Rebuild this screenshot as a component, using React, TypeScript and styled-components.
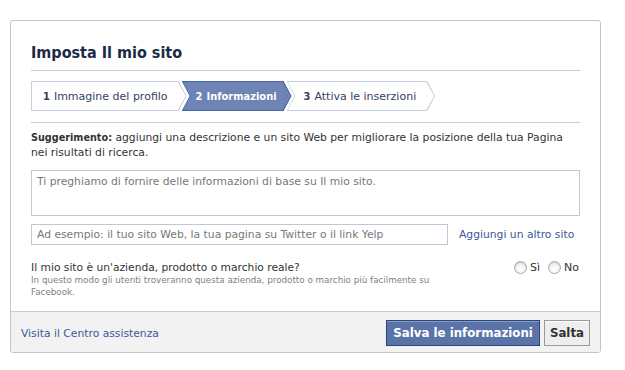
import styled, { createGlobalStyle } from "styled-components";

const boldFont = `"DejaVu Sans Condensed", "Liberation Sans", sans-serif`;

const GlobalStyle = createGlobalStyle`
    body {
        margin: 0;
        background: #fff;
        font-family: "DejaVu Sans", Verdana, sans-serif;
        font-size: 10.75px;
        color: #333;
    }
    b {
        font-family: ${boldFont};
    }
`;

const Page = styled.div`
    padding: 20px 0 0 10px;
`;

const Dialog = styled.div`
    box-sizing: border-box;
    width: 591px;
    border: 1px solid #c4c4c4;
    border-radius: 3px;
    overflow: hidden;
`;

const Body = styled.div`
    padding: 0 20px;
`;

const Title = styled.h2`
    margin: 0;
    padding: 22px 0 7px;
    font-family: ${boldFont};
    font-size: 16px;
    line-height: 20px;
    font-weight: bold;
    color: #1c2a47;
    border-bottom: 1px solid #ccc;
`;

const StepsRow = styled.div`
    display: flex;
    padding: 10px 0 11px;
    border-bottom: 1px solid #ccc;
`;

const notch = (first: boolean) =>
    first
        ? "polygon(0 0, calc(100% - 8px) 0, 100% 50%, calc(100% - 8px) 100%, 0 100%)"
        : "polygon(0 0, calc(100% - 8px) 0, 100% 50%, calc(100% - 8px) 100%, 0 100%, 8px 50%)";

const StepShape = styled.div<{ $first?: boolean; $active?: boolean }>`
    display: flex;
    height: 30px;
    padding: 1px;
    box-sizing: border-box;
    margin-left: ${(p) => (p.$first ? "0" : "-5px")};
    background: ${(p) => (p.$active ? "#4c66a4" : "#c7cedd")};
    clip-path: ${(p) => notch(!!p.$first)};
`;

const StepFace = styled.div<{ $first?: boolean; $active?: boolean }>`
    display: flex;
    align-items: center;
    padding: 0 ${(p) => (p.$active ? "14px" : "18px")} 0 ${(p) => (p.$first ? "11px" : p.$active ? "13px" : "16px")};
    font-size: 11px;
    color: ${(p) => (p.$active ? "#fff" : "#333f5e")};
    font-family: ${(p) => (p.$active ? boldFont : "inherit")};
    font-weight: ${(p) => (p.$active ? "bold" : "normal")};
    background: ${(p) => (p.$active ? "#6d84b4" : "#fff")};
    clip-path: ${(p) => notch(!!p.$first)};
    b {
        margin-right: 4px;
    }
`;

const Hint = styled.p`
    margin: 7px 0 0;
    line-height: 15px;
`;

const Area = styled.div`
    box-sizing: border-box;
    margin-top: 10px;
    height: 46px;
    border: 1px solid #bdc7d8;
    padding: 4px 5px;
    color: #777;
`;

const LinkRow = styled.div`
    display: flex;
    align-items: center;
    gap: 11px;
    margin-top: 8px;
`;

const Field = styled.div`
    box-sizing: border-box;
    width: 417px;
    height: 21px;
    border: 1px solid #bdc7d8;
    padding: 0 5px;
    display: flex;
    align-items: center;
    color: #777;
`;

const Link = styled.a`
    color: #3b5998;
    text-decoration: none;
    cursor: pointer;
`;

const Question = styled.div`
    display: flex;
    justify-content: space-between;
    margin: 15px 0 13px;
`;

const QuestionText = styled.div`
    font-size: 10.7px;
    line-height: 15px;
    color: #333;
`;

const Small = styled.div`
    width: 410px;
    font-size: 8.75px;
    line-height: 11.5px;
    color: #808080;
`;

const Choices = styled.div`
    display: flex;
    align-items: flex-start;
    gap: 8px;
    padding-top: 1px;
    margin-right: 1px;
`;

const Choice = styled.label`
    display: flex;
    align-items: center;
    gap: 3px;
    font-size: 11px;
    color: #333;
`;

const Radio = styled.span`
    box-sizing: border-box;
    width: 13px;
    height: 13px;
    border-radius: 50%;
    border: 1px solid #a8a8a8;
    background: radial-gradient(circle at 50% 70%, #fff 0%, #f4f4f4 45%, #d6d6d6 100%);
    box-shadow: inset 0 1px 1px rgba(0, 0, 0, 0.08);
`;

const Footer = styled.div`
    display: flex;
    align-items: center;
    justify-content: space-between;
    padding: 8px 10px 6px;
    background: #f2f2f2;
    border-top: 1px solid #ccc;
`;

const Buttons = styled.div`
    display: flex;
    gap: 4px;
`;

const Button = styled.button<{ $primary?: boolean }>`
    box-sizing: border-box;
    height: 26px;
    padding: 0 ${(p) => (p.$primary ? "6px" : "5px")};
    font-family: "DejaVu Sans", sans-serif;
    font-size: 11.8px;
    font-weight: bold;
    border: 1px solid ${(p) => (p.$primary ? "#29447e" : "#999")};
    background: ${(p) => (p.$primary ? "#5b74a8" : "#eee")};
    color: ${(p) => (p.$primary ? "#fff" : "#333")};
    box-shadow: inset 0 1px 0 ${(p) => (p.$primary ? "#8a9cc2" : "#fff")};
`;

const steps = [
    { n: "1", label: "Immagine del profilo" },
    { n: "2", label: "Informazioni", active: true },
    { n: "3", label: "Attiva le inserzioni" },
];

export default function App() {
    return (
        <Page>
            <GlobalStyle />
            <Dialog>
                <Body>
                    <Title>Imposta Il mio sito</Title>
                    <StepsRow>
                        {steps.map((s, i) => (
                            <StepShape key={s.n} $first={i === 0} $active={s.active}>
                                <StepFace $first={i === 0} $active={s.active}>
                                    <b>{s.n}</b>
                                    {s.label}
                                </StepFace>
                            </StepShape>
                        ))}
                    </StepsRow>
                    <Hint>
                        <b>Suggerimento:</b> aggiungi una descrizione e un sito Web per migliorare la posizione della tua Pagina nei risultati di ricerca.
                    </Hint>
                    <Area>Ti preghiamo di fornire delle informazioni di base su Il mio sito.</Area>
                    <LinkRow>
                        <Field>Ad esempio: il tuo sito Web, la tua pagina su Twitter o il link Yelp</Field>
                        <Link>Aggiungi un altro sito</Link>
                    </LinkRow>
                    <Question>
                        <div>
                            <QuestionText>Il mio sito è un'azienda, prodotto o marchio reale?</QuestionText>
                            <Small>In questo modo gli utenti troveranno questa azienda, prodotto o marchio più facilmente su Facebook.</Small>
                        </div>
                        <Choices>
                            <Choice><Radio />Sì</Choice>
                            <Choice><Radio />No</Choice>
                        </Choices>
                    </Question>
                </Body>
                <Footer>
                    <Link>Visita il Centro assistenza</Link>
                    <Buttons>
                        <Button $primary>Salva le informazioni</Button>
                        <Button>Salta</Button>
                    </Buttons>
                </Footer>
            </Dialog>
        </Page>
    );
}
